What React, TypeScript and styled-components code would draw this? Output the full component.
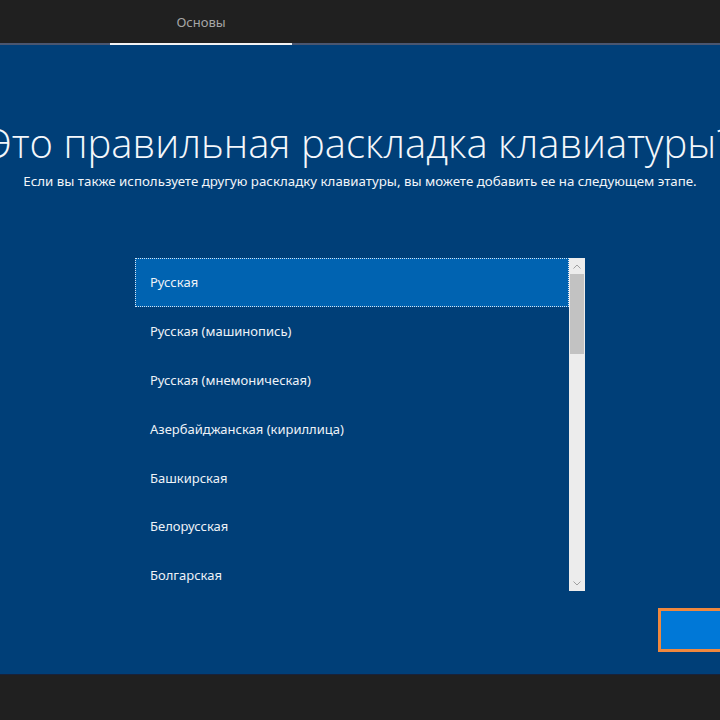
import styled, { createGlobalStyle } from "styled-components";

const Global = createGlobalStyle`
  html, body {
    margin: 0;
    padding: 0;
    background: #202020;
    overflow: hidden;
  }
  body {
    font-family: "Noto Sans", "Open Sans", Arial, sans-serif;
  }
`;

const Page = styled.div`
  display: flex;
  flex-direction: column;
  width: 720px;
  height: 720px;
  overflow: hidden;
`;

const TopBar = styled.header`
  display: flex;
  height: 43px;
  background: #202020;
  border-bottom: 2px solid #4a5670;
  padding-left: 110px;
`;

const Tab = styled.div<{ $active?: boolean }>`
  width: 182px;
  display: flex;
  align-items: center;
  justify-content: center;
  color: #a6a6a6;
  font-size: 13px;
  margin-bottom: -2px;
  border-bottom: 2px solid ${(p) => (p.$active ? "#f2f2f2" : "transparent")};
`;

const Main = styled.main`
  flex: 1;
  display: flex;
  flex-direction: column;
  background: #003f78;
  padding-top: 71px;
  min-height: 0;
`;

const TitleRow = styled.div`
  display: flex;
  justify-content: center;
`;

const Title = styled.h1`
  margin: 0;
  white-space: nowrap;
  font-family: "Open Sans", "Noto Sans", sans-serif;
  font-weight: 300;
  font-size: 40px;
  line-height: 54px;
  color: #f4f7fb;
`;

const Subtitle = styled.p`
  margin: 2px 0 0;
  text-align: center;
  white-space: nowrap;
  font-size: 13.3px;
  color: #f2f5f9;
`;

const ListWrap = styled.div`
  display: flex;
  margin: 68px 0 0 135px;
  width: 450px;
  height: 333px;
`;

const List = styled.ul`
  list-style: none;
  margin: 0;
  padding: 0;
  flex: 1;
  overflow: hidden;
`;

const Item = styled.li<{ $selected?: boolean }>`
  display: flex;
  align-items: center;
  box-sizing: border-box;
  height: 48.8px;
  padding-left: 14px;
  font-size: 13px;
  color: #eef2f7;
  background: ${(p) => (p.$selected ? "#0063b1" : "transparent")};
  border: 1px dotted ${(p) => (p.$selected ? "#d6e4f2" : "transparent")};
`;

const Scrollbar = styled.div`
  width: 16px;
  display: flex;
  flex-direction: column;
  background: #ececec;
`;

const Arrow = styled.div`
  height: 16px;
  display: flex;
  align-items: center;
  justify-content: center;
  color: #a0a0a0;
`;

const Track = styled.div`
  flex: 1;
  display: flex;
  flex-direction: column;
`;

const Thumb = styled.div`
  height: 80px;
  margin: 0 1px;
  background: #c2c2c2;
`;

const ButtonRow = styled.div`
  display: flex;
  justify-content: flex-end;
  margin-top: 17px;
`;

const NextButton = styled.button`
  width: 120px;
  height: 44px;
  margin-right: -58px;
  background: #0078d7;
  border: 3px solid #f0883e;
  padding: 0;
`;

const Footer = styled.footer`
  height: 45px;
  background: #202020;
  border-top: 1px solid #18223a;
`;

const layouts = [
  "Русская",
  "Русская (машинопись)",
  "Русская (мнемоническая)",
  "Азербайджанская (кириллица)",
  "Башкирская",
  "Белорусская",
  "Болгарская",
];

function Chevron({ up }: { up?: boolean }) {
  return (
    <svg width="8" height="5" viewBox="0 0 8 5" fill="none">
      <path
        d={up ? "M0.5 4.5 L4 1 L7.5 4.5" : "M0.5 0.5 L4 4 L7.5 0.5"}
        stroke="currentColor"
        strokeWidth="1"
      />
    </svg>
  );
}

export default function App() {
  return (
    <Page>
      <Global />
      <TopBar>
        <Tab $active>Основы</Tab>
      </TopBar>
      <Main>
        <TitleRow>
          <Title>Это правильная раскладка клавиатуры?</Title>
        </TitleRow>
        <Subtitle>
          Если вы также используете другую раскладку клавиатуры, вы можете
          добавить ее на следующем этапе.
        </Subtitle>
        <ListWrap>
          <List>
            {layouts.map((l, i) => (
              <Item key={l} $selected={i === 0}>
                {l}
              </Item>
            ))}
          </List>
          <Scrollbar>
            <Arrow>
              <Chevron up />
            </Arrow>
            <Track>
              <Thumb />
            </Track>
            <Arrow>
              <Chevron />
            </Arrow>
          </Scrollbar>
        </ListWrap>
        <ButtonRow>
          <NextButton aria-label="Далее" />
        </ButtonRow>
      </Main>
      <Footer />
    </Page>
  );
}
